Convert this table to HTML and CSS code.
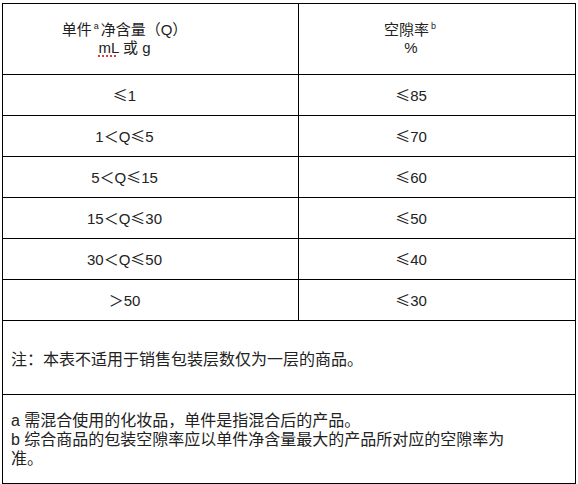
FILE: index.html
```html
<!DOCTYPE html>
<html lang="zh">
<head>
<meta charset="utf-8">
<link rel="stylesheet" href="styles.css">
</head>
<body>
<table class="spec">
  <colgroup><col class="c1"><col class="c2"></colgroup>
  <tr class="head">
    <td><div class="hl">单件<sup>a</sup>净含量（Q）</div><div class="hl"><span class="sp">mL</span> 或 g</div></td>
    <td><div class="hl">空隙率<sup>b</sup></div><div class="hl">%</div></td>
  </tr>
  <tr class="row"><td><span class="cj">≤</span>1</td><td><span class="cj">≤</span>85</td></tr>
  <tr class="row"><td>1<span class="cj">＜</span>Q<span class="cj">≤</span>5</td><td><span class="cj">≤</span>70</td></tr>
  <tr class="row"><td>5<span class="cj">＜</span>Q<span class="cj">≤</span>15</td><td><span class="cj">≤</span>60</td></tr>
  <tr class="row"><td>15<span class="cj">＜</span>Q<span class="cj">≤</span>30</td><td><span class="cj">≤</span>50</td></tr>
  <tr class="row"><td>30<span class="cj">＜</span>Q<span class="cj">≤</span>50</td><td><span class="cj">≤</span>40</td></tr>
  <tr class="row"><td><span class="cj">＞</span>50</td><td><span class="cj">≤</span>30</td></tr>
  <tr class="note"><td colspan="2">注：本表不适用于销售包装层数仅为一层的商品。</td></tr>
  <tr class="foot"><td colspan="2"><div class="fn">a 需混合使用的化妆品，单件是指混合后的产品。<br>b 综合商品的包装空隙率应以单件净含量最大的产品所对应的空隙率为准。</div></td></tr>
</table>
</body>
</html>
```
FILE: styles.css
```css
html, body { margin: 0; padding: 0; background: #fff; }
body {
  font-family: "Liberation Sans", "Noto Sans CJK SC", sans-serif;
  color: #222;
  font-size: 15px;
}
.spec {
  border-collapse: collapse;
  table-layout: fixed;
  width: 574px;
  margin: 3px 0 0 2px;
}
.c1 { width: 296px; }
.spec td {
  border: 1px solid #000;
  padding: 0;
  vertical-align: middle;
}
.head td, .row td {
  text-align: center;
  padding-right: 52px;
}
.head td { height: 70px; }
.row td { height: 40px; line-height: 18px; }
.cj { font-family: "Noto Sans CJK SC", sans-serif; }
.hl { line-height: 18px; }
sup {
  font-size: 9px;
  vertical-align: 6px;
  line-height: 0;
  margin: 0 2px;
}
.sp { text-decoration: underline dotted #c00; text-underline-offset: 3px; }
.note td { height: 73px; padding-left: 8px; font-size: 16px; }
.foot td { height: 88px; padding-left: 8px; font-size: 16px; }
.fn { width: 500px; line-height: 19px; }
```
